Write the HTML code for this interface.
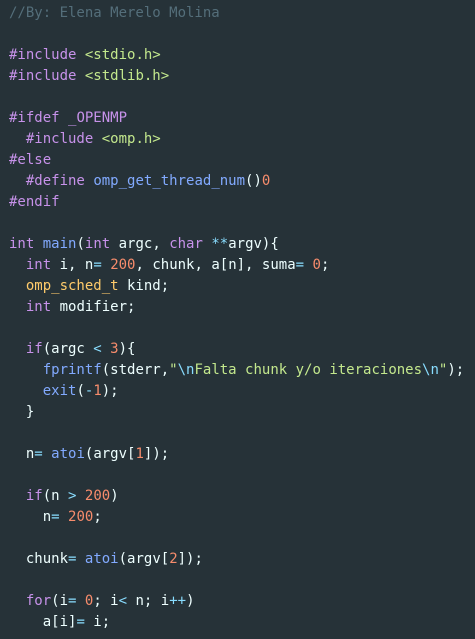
<!DOCTYPE html>
<html><head><meta charset="utf-8"><style>
html,body{margin:0;padding:0;background:#263238;width:475px;height:639px;overflow:hidden}
pre{margin:0;padding:3px 0 0 9px;font-family:"DejaVu Sans Mono","Liberation Mono",monospace;font-size:14px;line-height:21px;color:#eeffff}
.c{color:#546e7a}.k{color:#c792ea}.f{color:#82aaff}.n{color:#f78c6c}.s{color:#c3e88d}.t{color:#ffcb6b}.o{color:#89ddff}
</style></head><body><pre><span class="c">//By: Elena Merelo Molina</span>

<span class="k">#include</span> <span class="s">&lt;stdio.h&gt;</span>
<span class="k">#include</span> <span class="s">&lt;stdlib.h&gt;</span>

<span class="k">#ifdef</span> <span class="k">_OPENMP</span>
  <span class="k">#include</span> <span class="s">&lt;omp.h&gt;</span>
<span class="k">#else</span>
  <span class="k">#define</span> <span class="f">omp_get_thread_num</span>()<span class="n">0</span>
<span class="k">#endif</span>

<span class="k">int</span> <span class="f">main</span>(<span class="k">int</span> argc, <span class="k">char</span> <span class="o">**</span>argv){
  <span class="k">int</span> i, n<span class="o">=</span> <span class="n">200</span>, chunk, a[n], suma<span class="o">=</span> <span class="n">0</span>;
  <span class="t">omp_sched_t</span> kind;
  <span class="k">int</span> modifier;

  <span class="k">if</span>(argc <span class="o">&lt;</span> <span class="n">3</span>){
    <span class="f">fprintf</span>(stderr,<span class="s">"</span><span class="o">\n</span><span class="s">Falta chunk y/o iteraciones</span><span class="o">\n</span><span class="s">"</span>);
    <span class="f">exit</span>(<span class="o">-</span><span class="n">1</span>);
  }

  n<span class="o">=</span> <span class="f">atoi</span>(argv[<span class="n">1</span>]);

  <span class="k">if</span>(n <span class="o">&gt;</span> <span class="n">200</span>)
    n<span class="o">=</span> <span class="n">200</span>;

  chunk<span class="o">=</span> <span class="f">atoi</span>(argv[<span class="n">2</span>]);

  <span class="k">for</span>(i<span class="o">=</span> <span class="n">0</span>; i<span class="o">&lt;</span> n; i<span class="o">++</span>)
    a[i]<span class="o">=</span> i;
</pre></body></html>
